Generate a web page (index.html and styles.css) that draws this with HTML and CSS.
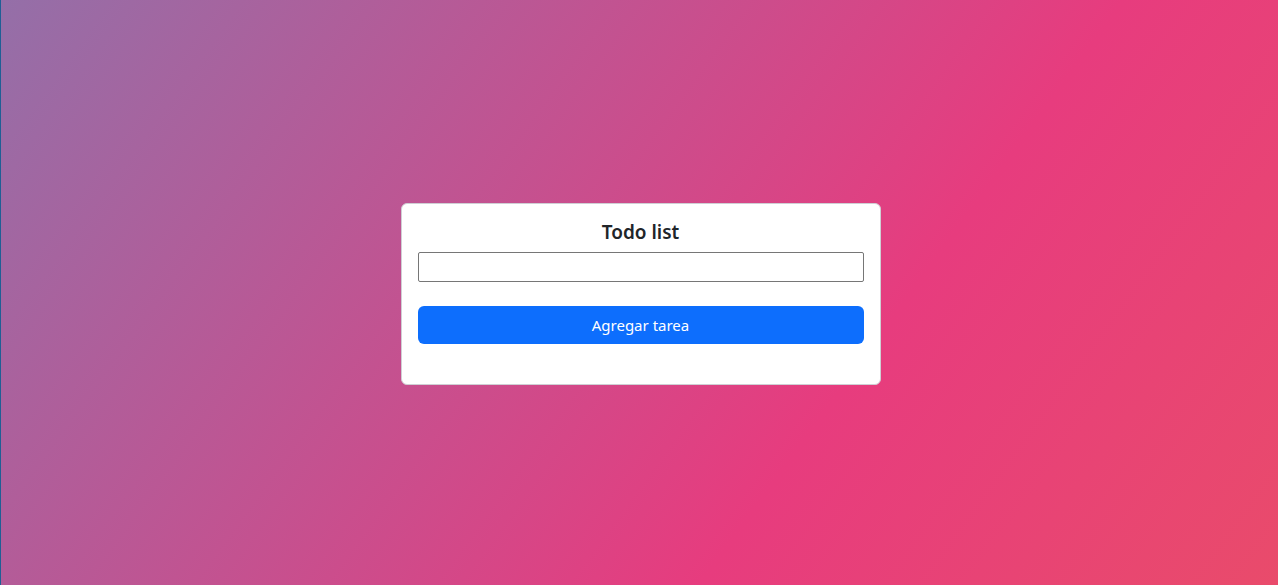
FILE: index.html
```html
<!DOCTYPE html>
<html lang="es">
<head>
<meta charset="utf-8">
<title>Todo list</title>
<link rel="stylesheet" href="styles.css">
</head>
<body>
<main class="page">
  <section class="card">
    <h5 class="card-title">Todo list</h5>
    <input class="task-input" type="text" aria-label="Tarea">
    <button class="btn-add" type="button">Agregar tarea</button>
  </section>
</main>
</body>
</html>
```
FILE: styles.css
```css
* { box-sizing: border-box; }
html, body { margin: 0; height: 100%; }
body {
  font-family: "Noto Sans", "Open Sans", sans-serif;
  background: linear-gradient(126deg, #946fa8 0%, #e73c7e 66%, #e94b6b 100%);
  border-left: 1px solid #1f5f95;
  overflow: hidden;
}
.page {
  height: 100%;
  display: flex;
  align-items: center;
  justify-content: center;
  padding-left: 2px;
  padding-top: 3px;
}
.card {
  width: 480px;
  background: #fff;
  border: 1px solid #cfcfd4;
  border-radius: 6px;
  padding: 16px 16px 16px;
  display: flex;
  flex-direction: column;
}
.card-title {
  margin: 0 0 8px;
  font-size: 19px;
  line-height: 24px;
  font-weight: 600;
  color: #212529;
  text-align: center;
}
.task-input {
  height: 30px;
  border: 1px solid #767676;
  border-radius: 2px;
  margin: 0 0 24px;
  font: inherit;
  padding: 0 4px;
}
.btn-add {
  height: 38px;
  margin-bottom: 24px;
  background: #0d6efd;
  color: #fff;
  border: 0;
  border-radius: 6px;
  font-family: inherit;
  font-size: 15px;
  cursor: pointer;
}
```
